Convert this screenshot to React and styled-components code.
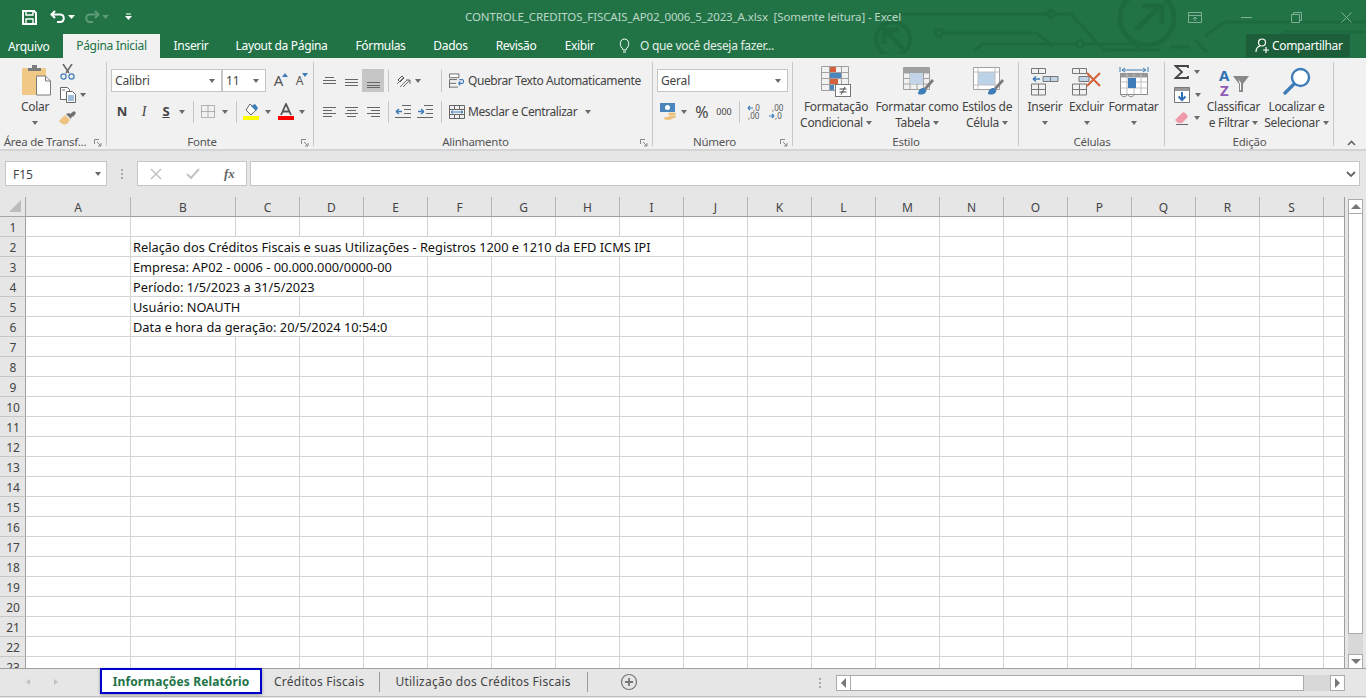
import React from "react";
import styled, { createGlobalStyle } from "styled-components";

const Global = createGlobalStyle`
  html, body { margin: 0; padding: 0; height: 100%; overflow: hidden; background: #e6e6e6; }
  body { font-family: "Noto Sans", "Liberation Sans", sans-serif; font-size: 12px; color: #444; }
  * { box-sizing: border-box; }
`;

const Page = styled.div`
  width: 1366px; height: 698px; display: flex; flex-direction: column; overflow: hidden;
`;
const Header = styled.header`
  position: relative; height: 58px; background: #217346; flex: none; overflow: hidden;
`;
const Circuit = styled.svg`
  position: absolute; left: 860px; top: 0; width: 506px; height: 54px;
`;
const TitleRow = styled.div`
  position: relative; height: 34px; display: flex; align-items: center;
`;
const Qat = styled.div`
  width: 465px; flex: none; display: flex; align-items: center; padding-left: 21px; height: 34px;
`;
const QatItem = styled.span`
  display: flex; align-items: center; justify-content: center; width: ${p => p.$w}px; height: 20px;
`;
const Title = styled.div`
  color: #bcd6c6; font-size: 11.5px; letter-spacing: -0.12px; white-space: pre; width: 440px;
  margin-top: -1px;
`;
const WinControls = styled.div`
  margin-left: auto; display: flex; width: 185px; justify-content: space-between; padding-right: 14px; padding-left: 7px;
`;
const TabsRow = styled.nav`
  position: relative; height: 24px; display: flex; align-items: stretch;
`;
const FileTab = styled.div`
  width: 63px; padding-left: 8px; color: #fff; font-size: 12px; line-height: 26px; letter-spacing: -0.3px;
`;
const RibbonTab = styled.div`
  width: ${p => p.$w}px; flex: none; text-align: center; white-space: nowrap; font-size: 12px; line-height: 23px; letter-spacing: -0.32px;
  color: ${p => p.$active ? "#217346" : "#fff"};
  background: ${p => p.$active ? "#f1f1f1" : "transparent"};
`;
const Tell = styled.div`
  display: flex; align-items: center; gap: 10px; margin-left: 11px; color: #e3eee8; font-size: 12px; letter-spacing: -0.3px; height: 23px;
`;
const Share = styled.div`
  position: absolute; left: 1246px; top: 0; width: 104px; height: 23px; background: #1c5e39; color: #fff;
  display: flex; align-items: center; padding-left: 6px; font-size: 12px; letter-spacing: -0.35px;
`;

const Ribbon = styled.section`
  height: 93px; flex: none; display: flex; background: #f1f1f1; border-bottom: 2px solid #d4d4d4; position: relative;
`;
const Group = styled.div`
  width: ${p => p.$w}px; flex: none; height: 92px; position: relative;
  display: flex; flex-direction: column;
  &::after { content: ""; position: absolute; right: 0; top: 4px; bottom: 4px; width: 1px; background: #c8c8c8; }
`;
const GroupBody = styled.div`
  height: 75px; display: flex; flex-direction: ${p => p.$col ? "column" : "row"};
  padding-top: ${p => p.$pt ?? 0}px; padding-left: ${p => p.$pl ?? 0}px; gap: ${p => p.$gap ?? 0}px;
`;
const GroupLabel = styled.div`
  height: 17px; text-align: center; font-size: 11.5px; line-height: 17px; color: #555; white-space: nowrap; letter-spacing: -0.25px;
  padding-right: ${p => p.$pr ?? 0}px;
`;
const Launcher = styled.svg`
  position: absolute; right: 5px; bottom: 3px; width: 8px; height: 8px;
`;
const Row = styled.div`
  display: flex; align-items: center; height: 23px;
`;
const SmallCol = styled.div`
  width: ${p => p.$w}px; margin-left: ${p => p.$ml ?? 0}px; padding-top: 2px; display: flex; flex-direction: column; flex: none;
`;
const Tool = styled.span`
  display: flex; align-items: center; justify-content: center; flex: none; height: 23px; width: ${p => p.$w}px;
  background: ${p => p.$active ? "#c6c6c6" : "transparent"};
  margin-left: ${p => p.$ml ?? 0}px; gap: ${p => p.$gap ?? 0}px;
`;
const GrowTool = styled(Tool)`
  position: relative;
`;
const GrowMark = styled.svg`
  position: absolute; top: 4px; right: ${p => p.$r}px; width: 6px; height: 4px;
`;
const Caret = styled.span`
  display: inline-block; flex: none; width: 0; height: 0; margin-left: ${p => p.$ml ?? 0}px;
  border-left: 3.5px solid transparent; border-right: 3.5px solid transparent; border-top: 4px solid #6a6a6a;
`;
const Sep = styled.span`
  flex: none; width: 1px; height: 22px; background: #c6c6c6; margin-left: ${p => p.$ml ?? 0}px;
`;
const Combo = styled.div`
  width: ${p => p.$w}px; height: 23px; background: #fff; border: 1px solid #c6c6c6; flex: none;
  display: flex; align-items: center; justify-content: space-between; padding: 0 6px 0 3px; font-size: 12px; color: #444; letter-spacing: -0.2px;
`;
const Glyph = styled.span`
  font-family: ${p => p.$serif ? '"Liberation Serif", serif' : '"Noto Sans", sans-serif'};
  font-size: ${p => p.$s ?? 13}px; font-weight: ${p => p.$b ? 700 : 400}; font-style: ${p => p.$i ? "italic" : "normal"};
  text-decoration: ${p => p.$u ? "underline" : "none"}; color: ${p => p.$c ?? "#444"}; line-height: 1;
`;
const TextTool = styled.span`
  display: flex; align-items: center; margin-left: 3px; font-size: 12px; color: #444; white-space: nowrap; letter-spacing: -0.42px; height: 23px;
`;
const Big = styled.div`
  width: ${p => p.$w}px; margin-left: ${p => p.$ml ?? 0}px; flex: none; display: flex; flex-direction: column; align-items: center;
`;
const BigIcon = styled.div`
  height: 41px; width: 100%; display: flex; justify-content: center; align-items: flex-end;
  padding-bottom: ${p => p.$pb ?? 2}px; padding-left: ${p => p.$pl ?? 0}px;
`;
const BigLine = styled.div`
  height: 16px; display: flex; align-items: center; font-size: 12px; line-height: 16px; color: #444; white-space: nowrap; letter-spacing: -0.3px;
`;
const Collapse = styled.svg`
  position: absolute; left: 1347px; top: 82px; width: 9px; height: 6px;
`;

const FormulaBar = styled.div`
  height: 46px; flex: none; display: flex; padding: 10px 6px 0 5px; align-items: flex-start; background: #e6e6e6;
`;
const NameBox = styled.div`
  width: 102px; height: 25px; background: #fff; border: 1px solid #c6c6c6; display: flex; align-items: center; justify-content: space-between;
  padding: 1px 5px 0 7px; font-size: 12px; color: #444;
`;
const Dots = styled.div`
  width: 30px; height: 25px; display: flex; flex-direction: column; align-items: center; justify-content: center; gap: 2px;
  i { width: 2px; height: 2px; background: #aaa; display: block; }
`;
const FxBox = styled.div`
  width: 110px; height: 25px; background: #fff; border: 1px solid #c6c6c6; display: flex; align-items: center; flex: none;
  padding-left: 12px; gap: 24px;
`;
const FormulaInput = styled.div`
  flex: 1; height: 25px; margin-left: 3px; background: #fff; border: 1px solid #c6c6c6; display: flex; align-items: center; justify-content: flex-end; padding-right: 3px;
`;

const SheetArea = styled.main`
  height: 472px; flex: none; display: flex; background: #e6e6e6; overflow: hidden;
`;
const Grid = styled.div`
  width: 1345px; flex: none; height: 472px; overflow: hidden; display: grid;
  grid-template-columns: 26px 105px 105px repeat(17, 64px) 21px;
  grid-auto-rows: 20px; background: #fff;
`;
const Corner = styled.div`
  background: #e6e6e6; border-right: 1px solid #a6a6a6; border-bottom: 1px solid #a6a6a6; display: flex; align-items: flex-end; justify-content: flex-end; padding: 0 4px 4px 0;
`;
const ColHead = styled.div`
  background: #e6e6e6; border-right: 1px solid ${p => p.$last ? "#9f9f9f" : "#b4b4b4"}; border-bottom: 1px solid #9f9f9f;
  text-align: center; line-height: 21px; font-size: 12px; color: #444; overflow: hidden;
`;
const RowHead = styled.div`
  background: #e6e6e6; border-right: 1px solid #9f9f9f; border-bottom: 1px solid #c6c6c6;
  text-align: center; line-height: 21px; font-size: 12px; color: #444; padding-left: 1px; overflow: hidden;
`;
const Cell = styled.div`
  grid-column: span ${p => p.$span ?? 1};
  border-right: 1px solid ${p => p.$last ? "#9f9f9f" : "#d4d4d4"}; border-bottom: 1px solid #d4d4d4;
  padding-left: 2px; font-size: 12.8px; line-height: 20px; color: #111; white-space: nowrap; overflow: hidden;
`;
const VScroll = styled.aside`
  width: 21px; flex: none; height: 472px; padding: 2px 0 0 3px; display: flex; flex-direction: column;
`;
const SBtn = styled.div`
  width: ${p => p.$w ?? 15}px; height: ${p => p.$h ?? 15}px; background: #fff; border: 1px solid #ababab; display: flex; align-items: center; justify-content: center; flex: none;
`;
const VThumb = styled.div`
  width: 15px; height: 420px; background: #fff; border: 1px solid #ababab; border-top: 0; flex: none;
`;
const VTrack = styled.div`
  width: 15px; flex: 1; background: #d8d8d8;
`;
const Arrow = styled.span`
  width: 0; height: 0; display: block; flex: none;
  ${p => p.$dir === "up" && "border-left:5px solid transparent;border-right:5px solid transparent;border-bottom:5px solid #777;"}
  ${p => p.$dir === "down" && "border-left:5px solid transparent;border-right:5px solid transparent;border-top:5px solid #777;"}
  ${p => p.$dir === "left" && "border-top:5px solid transparent;border-bottom:5px solid transparent;border-right:5px solid #777;"}
  ${p => p.$dir === "right" && "border-top:5px solid transparent;border-bottom:5px solid transparent;border-left:5px solid #777;"}
`;
const SheetBar = styled.footer`
  height: 29px; flex: none; display: flex; align-items: flex-start; background: #e6e6e6; border-top: 1px solid #9f9f9f; border-bottom: 1px solid #c0c0c0; position: relative;
  margin-top: -1px;
`;
const NavArrows = styled.div`
  width: 100px; flex: none; height: 26px; display: flex; align-items: center; padding-left: 26px; gap: 24px;
`;
const SmallArrow = styled.span`
  width: 0; height: 0; display: block;
  border-top: 3.5px solid transparent; border-bottom: 3.5px solid transparent;
  ${p => p.$left ? "border-right: 4px solid #c2c2c2;" : "border-left: 4px solid #c2c2c2;"}
`;
const ActiveSheet = styled.div`
  width: 162px; height: 26px; margin-top: -1px; background: #fff; border: 2px solid #0000c8; box-shadow: 0 1px 3px rgba(0,0,0,.35);
  color: #217346; font-weight: 700; font-size: 12px; text-align: center; line-height: 24px; letter-spacing: .13px;
`;
const SheetTab = styled.div`
  padding: 0 ${p => p.$pr}px 0 ${p => p.$pl}px; height: 26px; line-height: 26px; font-size: 12px; color: #444; white-space: nowrap; letter-spacing: .25px;
`;
const TabSep = styled.span`
  width: 1px; height: 20px; margin-top: 3px; background: #9a9a9a; flex: none;
`;
const Plus = styled.svg`
  width: 18px; height: 18px; margin: 4px 0 0 32px; flex: none;
`;
const HDots = styled.div`
  position: absolute; left: 819px; top: 9px; display: flex; flex-direction: column; gap: 2px;
  i { width: 2px; height: 2px; background: #aaa; display: block; }
`;
const HScroll = styled.div`
  position: absolute; left: 836px; top: 6px; width: 509px; height: 16px; display: flex; background: #d8d8d8;
`;
const HThumb = styled.div`
  width: 453px; height: 16px; background: #fff; border: 1px solid #ababab; border-left: 0; flex: none;
`;
const HTrack = styled.div`flex: 1;`;

const S = ({ w, h, children, ...r }) => <svg width={w} height={h} viewBox={`0 0 ${w} ${h}`} fill="none" {...r}>{children}</svg>;

const SaveI = () => <S w={15} h={15}><path d="M1 1h11l2 2v11H1z" stroke="#fff" strokeWidth="2"/><path d="M4 1v4h7V1M4 14V9h7v5" stroke="#fff" strokeWidth="1.4"/></S>;
const UndoI = ({ c = "#fff" }) => <S w={16} h={14}><path d="M5 1 1.5 4.5 5 8" stroke={c} strokeWidth="2"/><path d="M2 4.5h8c5 0 5 7.5 0 7.5H7" stroke={c} strokeWidth="2"/></S>;
const RedoI = () => <S w={16} h={14}><g transform="matrix(-1 0 0 1 16 0)"><path d="M5 1 1.5 4.5 5 8" stroke="#5d9a78" strokeWidth="2"/><path d="M2 4.5h8c5 0 5 7.5 0 7.5H7" stroke="#5d9a78" strokeWidth="2"/></g></S>;
const WCaret = ({ c = "#fff" }) => <S w={7} h={4}><path d="M0 0h7L3.5 4z" fill={c}/></S>;
const CustomI = () => <S w={7} h={8}><path d="M1 1h5" stroke="#fff"/><path d="M0 3h7L3.5 7z" fill="#fff"/></S>;

const ClipI = () => <S w={30} h={31}>
  <rect x="0" y="3" width="24" height="27" rx="1" fill="#f0c987"/>
  <path d="M6 6V3h4V0h5v3h4v3z" fill="#7b7b7b"/>
  <path d="M14.5 11h9l5 5v14h-14z" fill="#fff" stroke="#7b7b7b"/><path d="M23.5 11v5h5" stroke="#7b7b7b"/>
</S>;
const Scissors = () => <S w={15} h={16}>
  <path d="M3 0l6 9M12 0 6 9" stroke="#6a6a6a" strokeWidth="1.6"/>
  <circle cx="3.5" cy="12.5" r="2.6" stroke="#3e7cb8" strokeWidth="1.2"/><circle cx="11.5" cy="12.5" r="2.6" stroke="#3e7cb8" strokeWidth="1.2"/>
</S>;
const CopyI = () => <S w={16} h={16}>
  <path d="M.5.5h7l2 2v10H.5z" fill="#fff" stroke="#666"/>
  <path d="M2 3h3" stroke="#666"/>
  <path d="M6.5 4.5h6l3 3v8h-9z" fill="#fff" stroke="#666"/>
  <path d="M8 9h6M8 11h6M8 13h6" stroke="#3e7cb8"/>
</S>;
const Brush = () => <S w={17} h={14}>
  <path d="M0 10 6 4l5 5-3 4c-3 1-6 0-8-3z" fill="#eec27f"/>
  <path d="M7 3l3-1 3 3-1 3zM11 3l4-3 2 2-3 4z" fill="#6f6f6f"/>
</S>;
const BorderI = () => <S w={14} h={13}>
  <path d="M.5.5h13v12H.5z" stroke="#777" strokeDasharray="1 1"/><path d="M7 .5v12M.5 6.500h13" stroke="#777" strokeDasharray="1 1"/>
</S>;
const FillI = () => <S w={17} h={17}>
  <path d="M7 1l6 6-5 5-5-5z" fill="#fff" stroke="#666"/>
  <path d="M8 3l4-2 3 4-2 3z" fill="#3e7cb8"/>
  <rect x="0" y="13" width="16" height="4" fill="#ffff00"/>
</S>;
const ColorA = () => <S w={16} h={17}>
  <path d="M3 12 8 1l5 11M5 8.500h6" stroke="#555" strokeWidth="1.8"/>
  <rect x="0" y="13" width="16" height="4" fill="#ff0000"/>
</S>;
const Lines = ({ ys, xs }) => <S w={15} h={15}>{ys.map((y, i) => <path key={i} d={`M${xs ? xs[i][0] : 1} ${y + .5}H${xs ? xs[i][1] : 14}`} stroke="#666"/>)}</S>;
const Orient = () => <S w={16} h={16}>
  <path d="M2 11 9 4M5 14 12 7" stroke="#777"/><path d="M3 7l4-4 2 2-4 4z" stroke="#555"/><path d="M8 14l7-7M15 7v4M15 7h-4" stroke="#666"/>
</S>;
const OutI = ({ flip }) => <S w={16} h={13}>
  <path d="M7 .5h9M9 4.500h7M9 8.500h7M0 12.500h16" stroke="#666"/>
  <g transform={flip ? "matrix(-1 0 0 1 8 0)" : ""}><path d="M1 6.500h6M1 6.500 4 4M1 6.500 4 9" stroke="#3e7cb8" strokeWidth="1.5"/></g>
</S>;
const WrapI = () => <S w={17} h={16}>
  <path d="M.5.5h10v4H.5z" fill="#fff" stroke="#666"/><path d="M.5 6.500h8M.5 15.500V6.500M.5 10.500h7M.5 14.500h9" stroke="#666"/>
  <path d="M10 10.500h4c2 0 2-4 0-4h-3M10 10.500l2-2M10 10.500l2 2" stroke="#3e7cb8" strokeWidth="1.2"/>
</S>;
const MergeI = () => <S w={16} h={16}>
  <path d="M.5 1.500h15v13H.5zM.5 5.500h15M.5 10.500h15M5.500 1.500v4M10.500 1.500v4M5.500 10.500v4M10.500 10.500v4" stroke="#666"/>
  <path d="M2 8h12M2 8l2-1.500M2 8l2 1.500M14 8l-2-1.500M14 8l-2 1.500" stroke="#3e7cb8"/>
</S>;
const Currency = () => <S w={17} h={17}>
  <rect x="0" y="0" width="15" height="9" fill="#4a86bd"/><circle cx="7.500" cy="4.500" r="2.500" fill="#fff"/>
  <ellipse cx="12" cy="11" rx="4" ry="1.400" fill="#eec27f"/><ellipse cx="12" cy="14" rx="4" ry="1.400" fill="#eec27f"/><ellipse cx="8" cy="15.500" rx="4" ry="1.400" fill="#eec27f"/>
</S>;
const DecI = ({ inc }) => <S w={16} h={16}>
  <text x={inc ? 6 : 4} y="7" fontFamily="Noto Sans" fontSize="8" fill="#555">{inc ? ",0" : ",00"}</text>
  <text x={inc ? 1 : 7} y="15" fontFamily="Noto Sans" fontSize="8" fill="#555">{inc ? ",00" : ",0"}</text>
  {inc ? <path d="M1 4h5M1 4l2-2M1 4l2 2" stroke="#3e7cb8" strokeWidth="1.2"/> : <path d="M1 12h5M6 12l-2-2M6 12l-2 2" stroke="#3e7cb8" strokeWidth="1.2"/>}
</S>;
const CondFmt = () => <S w={30} h={31}>
  <path d="M.5.5h27v24H.5zM.5 6.500h27M.5 12.500h27M.5 18.500h27M8.500.5v24M20.500.5v24" stroke="#a0a0a0"/>
  <rect x="9" y="1" width="6" height="5" fill="#d5603a"/>
  <rect x="9" y="7" width="11" height="5" fill="#4a86bd"/>
  <rect x="9" y="13" width="8" height="5" fill="#d5603a"/>
  <rect x="9" y="19" width="4" height="5" fill="#4a86bd"/>
  <rect x="14.500" y="18.500" width="15" height="12" fill="#fff" stroke="#777"/>
  <path d="M18.500 23h7M18.500 26h7M24 21l-4 7.500" stroke="#444"/>
</S>;
const Pen = () => <g><path d="M21 21l8-9 2 2-8 9z" fill="#7a7a7a"/><path d="M15 27c0-4 3-6 5-6s4 2 3 4c-2 3-5 3-8 2z" fill="#3e7cb8"/></g>;
const TableFmt = () => <S w={32} h={30}>
  <path d="M.5.5h26v22H.5zM.5 6h26M.5 11.500h26M.5 17h26M7 .5v22M14 .5v22M20.500.5v22" stroke="#a0a0a0"/>
  <rect x="1" y="1" width="25" height="5" fill="#a0a0a0"/><rect x="7" y="6" width="13" height="11" fill="#c2d4e8"/>
  <Pen/>
</S>;
const CellFmt = () => <S w={32} h={30}>
  <path d="M.5.5h26v22H.5z" fill="#fff" stroke="#a0a0a0"/><rect x="5" y="5" width="17" height="13" fill="#bcd2e8"/>
  <path d="M5 .5v22M22 .5v22M.5 5h26M.5 18h26" stroke="#c0c0c0"/>
  <Pen/>
</S>;
const InsertI = () => <S w={28} h={28}>
  <path d="M.5.5h14v5H.5zM7.500.5v5" stroke="#777"/>
  <path d="M.5 16h14v11H.5zM.5 21.500h14M7.500 16v11" stroke="#777"/>
  <path d="M12 8.500h15v5H12zM19.500 8.500v5" fill="#c2d4e8" stroke="#777"/>
  <path d="M2 11h7M2 11l3-2.500M2 11l3 2.500" stroke="#3e7cb8" strokeWidth="1.5"/>
</S>;
const DeleteI = () => <S w={30} h={28}>
  <path d="M.5.5h14v5H.5zM7.500.5v5" stroke="#777"/>
  <path d="M.5 16h14v11H.5zM.5 21.500h14M7.500 16v11" stroke="#777"/>
  <path d="M7 8.500h10v5H7z" fill="#c2d4e8" stroke="#777"/>
  <path d="M15 5l13 13M28 5 15 18" stroke="#d5603a" strokeWidth="2"/>
</S>;
const FormatI = () => <S w={30} h={32}>
  <path d="M1 0v5M29 0v5M3 3h24M3 3l3-2M3 3l3 2M27 3l-3-2M27 3l-3 2" stroke="#3e7cb8"/>
  <path d="M1.500 6.500h27v21H1.500z" fill="#fff" stroke="#888"/><path d="M1.500 6.500h27v4h-27z" fill="#999"/>
  <path d="M1.500 15h27M1.500 21h27M8 6.500v21M15 6.500v21M22 6.500v21" stroke="#c0c0c0"/>
  <rect x="9" y="11" width="8" height="10" fill="#3e7cb8"/>
  <path d="M1.500 27.500c2 3 5 3 7 0 2 3 5 3 7 0" stroke="#888"/>
</S>;
const SigmaI = () => <S w={15} h={14}><path d="M14 3V1H1.500L8 7 1.500 13H14v-2" stroke="#444" strokeWidth="1.800"/></S>;
const FillDown = () => <S w={16} h={16}>
  <path d="M.5.5h15v15H.5z" fill="#fff" stroke="#777"/><rect x="1" y="1" width="14" height="3" fill="#999"/>
  <path d="M8 5v8M4.500 9.500 8 13l3.500-3.500" stroke="#2f70b5" strokeWidth="2"/>
</S>;
const Eraser = () => <S w={15} h={14}>
  <path d="M1 9l7-7c1-1 2-1 3 0l2 2c1 1 1 2 0 3l-5 5H4z" fill="#ef9aa8"/><path d="M2 13.500h12" stroke="#666"/>
</S>;
const SortI = () => <S w={32} h={30}>
  <text x="1" y="14" fontFamily="Noto Sans" fontWeight="700" fontSize="15" fill="#2f70b5">A</text>
  <text x="2" y="29" fontFamily="Noto Sans" fontWeight="700" fontSize="15" fill="#8e5bb5">Z</text>
  <path d="M15 9h16l-6 8v8h-4v-8z" fill="#888"/><path d="M20 12l3 4v7h-1v-6z" fill="#fff"/>
</S>;
const FindI = () => <S w={28} h={29}>
  <circle cx="17.500" cy="10.500" r="8.500" stroke="#3e7cb8" strokeWidth="2.400" fill="#fff"/>
  <path d="M11 17 2 26" stroke="#3e7cb8" strokeWidth="3.400" strokeLinecap="round"/>
</S>;
const Launch = () => <Launcher viewBox="0 0 8 8" fill="none"><path d="M.5 5V.5H5" stroke="#888"/><path d="M3 3l4 4M7 4v3H4" stroke="#888"/></Launcher>;
const X = () => <S w={12} h={12}><path d="M1 1l10 10M11 1 1 11" stroke="#c4c4c4" strokeWidth="1.600"/></S>;
const Check = () => <S w={14} h={12}><path d="M1 6l4 4 8-9" stroke="#c4c4c4" strokeWidth="2"/></S>;
const Chevron = () => <S w={10} h={6}><path d="M1 1l4 4 4-4" stroke="#666" strokeWidth="1.800"/></S>;
const Bulb = () => <S w={11} h={15}><path d="M3 10C0 7 1 1 5.500 1S11 7 8 10c-.5.5-1 1-1 2H4c0-1-.5-1.500-1-2zM4 14h3" stroke="#fff"/></S>;
const ShareI = () => <S w={15} h={15}><circle cx="7" cy="4.500" r="3.500" stroke="#fff" strokeWidth="1.200"/><path d="M1 14c0-3.500 2-5.500 4-6M9 8.500" stroke="#fff" strokeWidth="1.200"/><path d="M8 12h6M11 9v6" stroke="#fff" strokeWidth="1.200"/></S>;

const CircuitArt = () => (
  <Circuit viewBox="0 0 506 54" fill="none" stroke="#1d6a3f" strokeWidth="3">
    <circle cx="33" cy="39" r="17" strokeWidth="4"/>
    <path d="M46 52 26 31M24 44V30h15" strokeWidth="5"/>
    <path d="M15 14H191" />
    <circle cx="191" cy="14" r="3.500"/>
    <path d="M195 14h16l33 36H300" />
    <circle cx="79" cy="33" r="3.500"/>
    <path d="M83 33H176l17 13" />
    <circle cx="220" cy="44" r="3.500"/>
    <path d="M115 50l8-6h92M225 44h50l6 6" />
    <circle cx="287" cy="18" r="27" strokeWidth="5"/>
    <path d="M276 30 300 6M282 6h20v18" strokeWidth="5"/>
    <path d="M310 47 330 47M335 40l12 12M345 36l20-14h141M405 50l20-18h81" />
  </Circuit>
);

const columns = "ABCDEFGHIJKLMNOPQRS".split("");
const colCount = 20;
const rowsData = {
  2: { span: 8, text: "Relação dos Créditos Fiscais e suas Utilizações - Registros 1200 e 1210 da EFD ICMS IPI" },
  3: { span: 4, text: "Empresa: AP02 - 0006 - 00.000.000/0000-00" },
  4: { span: 3, text: "Período: 1/5/2023 a 31/5/2023" },
  5: { span: 2, text: "Usuário: NOAUTH" },
  6: { span: 4, text: "Data e hora da geração: 20/5/2024 10:54:0" },
};

function Sheet() {
  const rows = [];
  for (let r = 1; r <= 23; r++) {
    const d = rowsData[r];
    const cells = [<RowHead key="h">{r}</RowHead>, <Cell key="a" />];
    let start = 1;
    if (d) {
      cells.push(<Cell key="b" $span={d.span}>{d.text}</Cell>);
      start = 1 + d.span;
    }
    for (let c = start; c < colCount; c++) cells.push(<Cell key={c} $last={c === colCount - 1} />);
    rows.push(<React.Fragment key={r}>{cells}</React.Fragment>);
  }
  return (
    <Grid>
      <Corner><S w={12} h={12}><path d="M12 0v12H0z" fill="#bcbcbc"/></S></Corner>
      {columns.map(c => <ColHead key={c}>{c}</ColHead>)}
      <ColHead $last />
      {rows}
    </Grid>
  );
}

export default function App() {
  return (
    <Page>
      <Global />
      <Header>
        <CircuitArt />
        <TitleRow>
          <Qat>
            <QatItem $w={16}><SaveI /></QatItem>
            <QatItem $w={13} />
            <QatItem $w={16}><UndoI /></QatItem>
            <QatItem $w={11}><WCaret /></QatItem>
            <QatItem $w={7} />
            <QatItem $w={16}><RedoI /></QatItem>
            <QatItem $w={11}><WCaret c="#5d9a78" /></QatItem>
            <QatItem $w={13} />
            <QatItem $w={9}><CustomI /></QatItem>
          </Qat>
          <Title>CONTROLE_CREDITOS_FISCAIS_AP02_0006_5_2023_A.xlsx  [Somente leitura] - Excel</Title>
          <WinControls>
            <S w={14} h={11}><path d="M.5.5h13v10H.5zM.5 3.500h13M7 9V5M5 7l2-2 2 2" stroke="#7fb096"/></S>
            <S w={11} h={11}><path d="M0 5.500h11" stroke="#7fb096"/></S>
            <S w={11} h={11}><path d="M.5 2.500h8v8h-8zM2.500 2.500v-2h8v8h-2" stroke="#7fb096"/></S>
            <S w={11} h={11}><path d="M.5.5l10 10M10.500.5l-10 10" stroke="#7fb096"/></S>
          </WinControls>
        </TitleRow>
        <TabsRow>
          <FileTab>Arquivo</FileTab>
          <RibbonTab $w={97} $active>Página Inicial</RibbonTab>
          <RibbonTab $w={62}>Inserir</RibbonTab>
          <RibbonTab $w={119}>Layout da Página</RibbonTab>
          <RibbonTab $w={79}>Fórmulas</RibbonTab>
          <RibbonTab $w={61}>Dados</RibbonTab>
          <RibbonTab $w={70}>Revisão</RibbonTab>
          <RibbonTab $w={57}>Exibir</RibbonTab>
          <Tell><Bulb /><span>O que você deseja fazer...</span></Tell>
          <Share><Tool $w={20}><ShareI /></Tool>Compartilhar</Share>
        </TabsRow>
      </Header>

      <Ribbon>
        <Group $w={107}>
          <GroupBody>
            <Big $w={46} $ml={12}>
              <BigIcon $pb={3} $pl={3}><ClipI /></BigIcon>
              <BigLine>Colar</BigLine>
              <BigLine><Caret /></BigLine>
            </Big>
            <SmallCol $w={30}>
              <Tool $w={18}><Scissors /></Tool>
              <Tool $w={30} $gap={4}><CopyI /><Caret /></Tool>
              <Tool $w={18}><Brush /></Tool>
            </SmallCol>
          </GroupBody>
          <GroupLabel $pr={17}>Área de Transf...</GroupLabel>
          <Launch />
        </Group>

        <Group $w={207}>
          <GroupBody $col $pt={11} $pl={4} $gap={8}>
            <Row>
              <Combo $w={111}>Calibri<Caret /></Combo>
              <Combo $w={44}>11<Caret /></Combo>
              <GrowTool $w={21} $ml={2}>
                <Glyph $s={15} $c="#555">A</Glyph>
                <GrowMark $r={1} viewBox="0 0 6 4"><path d="M0 4l3-4 3 4z" fill="#3e7cb8"/></GrowMark>
              </GrowTool>
              <GrowTool $w={21}>
                <Glyph $s={12} $c="#555">A</Glyph>
                <GrowMark $r={2} viewBox="0 0 6 4"><path d="M0 0h6L3 4z" fill="#3e7cb8"/></GrowMark>
              </GrowTool>
            </Row>
            <Row>
              <Tool $w={22}><Glyph $b>N</Glyph></Tool>
              <Tool $w={22}><Glyph $i $serif $s={14}>I</Glyph></Tool>
              <Tool $w={22}><Glyph $b $u>S</Glyph></Tool>
              <Tool $w={10}><Caret /></Tool>
              <Sep $ml={6} />
              <Tool $w={22} $ml={3}><BorderI /></Tool>
              <Tool $w={12}><Caret /></Tool>
              <Sep $ml={5} />
              <Tool $w={17} $ml={6}><FillI /></Tool>
              <Tool $w={16}><Caret /></Tool>
              <Tool $w={20}><ColorA /></Tool>
              <Tool $w={12}><Caret /></Tool>
            </Row>
          </GroupBody>
          <GroupLabel $pr={17}>Fonte</GroupLabel>
          <Launch />
        </Group>

        <Group $w={339}>
          <GroupBody $col $pt={11} $pl={4} $gap={8}>
            <Row>
              <Tool $w={22}><Lines ys={[4, 7, 10]} xs={[[3,12],[1,14],[1,14]]} /></Tool>
              <Tool $w={22}><Lines ys={[6, 9, 12]} /></Tool>
              <Tool $w={22} $active><Lines ys={[9, 12, 14]} /></Tool>
              <Sep $ml={4} />
              <Tool $w={20} $ml={4}><Orient /></Tool>
              <Tool $w={10}><Caret /></Tool>
              <Sep $ml={18} />
              <Tool $w={16} $ml={7}><WrapI /></Tool>
              <TextTool>Quebrar Texto Automaticamente</TextTool>
            </Row>
            <Row>
              <Tool $w={22}><Lines ys={[3, 6, 9, 12]} xs={[[1,14],[1,10],[1,14],[1,10]]} /></Tool>
              <Tool $w={22}><Lines ys={[3, 6, 9, 12]} xs={[[1,14],[3,12],[1,14],[3,12]]} /></Tool>
              <Tool $w={22}><Lines ys={[3, 6, 9, 12]} xs={[[1,14],[5,14],[1,14],[5,14]]} /></Tool>
              <Sep $ml={4} />
              <Tool $w={22} $ml={3}><OutI /></Tool>
              <Tool $w={22}><OutI flip /></Tool>
              <Sep $ml={5} />
              <Tool $w={16} $ml={7}><MergeI /></Tool>
              <TextTool>Mesclar e Centralizar<Caret $ml={8} /></TextTool>
            </Row>
          </GroupBody>
          <GroupLabel $pr={16}>Alinhamento</GroupLabel>
          <Launch />
        </Group>

        <Group $w={140}>
          <GroupBody $col $pt={11} $pl={4} $gap={8}>
            <Row><Combo $w={131}>Geral<Caret /></Combo></Row>
            <Row>
              <Tool $w={22}><Currency /></Tool>
              <Tool $w={9}><Caret /></Tool>
              <Tool $w={28}><Glyph $s={16}>%</Glyph></Tool>
              <Tool $w={16}><Glyph $s={9}>000</Glyph></Tool>
              <Sep $ml={7} />
              <Tool $w={22} $ml={4}><DecI inc /></Tool>
              <Tool $w={20}><DecI /></Tool>
            </Row>
          </GroupBody>
          <GroupLabel $pr={17}>Número</GroupLabel>
          <Launch />
        </Group>

        <Group $w={226}>
          <GroupBody>
            <Big $w={80} $ml={3}>
              <BigIcon><CondFmt /></BigIcon>
              <BigLine>Formatação</BigLine>
              <BigLine>Condicional<Caret $ml={3} /></BigLine>
            </Big>
            <Big $w={82}>
              <BigIcon $pl={4}><TableFmt /></BigIcon>
              <BigLine>Formatar como</BigLine>
              <BigLine>Tabela<Caret $ml={3} /></BigLine>
            </Big>
            <Big $w={58}>
              <BigIcon $pl={4}><CellFmt /></BigIcon>
              <BigLine>Estilos de</BigLine>
              <BigLine>Célula<Caret $ml={3} /></BigLine>
            </Big>
          </GroupBody>
          <GroupLabel>Estilo</GroupLabel>
        </Group>

        <Group $w={146}>
          <GroupBody>
            <Big $w={42} $ml={5}>
              <BigIcon $pb={3}><InsertI /></BigIcon>
              <BigLine>Inserir</BigLine>
              <BigLine><Caret /></BigLine>
            </Big>
            <Big $w={41}>
              <BigIcon $pb={3}><DeleteI /></BigIcon>
              <BigLine>Excluir</BigLine>
              <BigLine><Caret /></BigLine>
            </Big>
            <Big $w={53}>
              <BigIcon $pb={0}><FormatI /></BigIcon>
              <BigLine>Formatar</BigLine>
              <BigLine><Caret /></BigLine>
            </Big>
          </GroupBody>
          <GroupLabel>Células</GroupLabel>
        </Group>

        <Group $w={169}>
          <GroupBody>
            <SmallCol $w={32} $ml={6}>
              <Tool $w={32} $gap={5}><SigmaI /><Caret /></Tool>
              <Tool $w={32} $gap={5}><FillDown /><Caret /></Tool>
              <Tool $w={32} $gap={5}><Eraser /><Caret /></Tool>
            </SmallCol>
            <Big $w={61}>
              <BigIcon><SortI /></BigIcon>
              <BigLine>Classificar</BigLine>
              <BigLine>e Filtrar<Caret $ml={3} /></BigLine>
            </Big>
            <Big $w={65}>
              <BigIcon $pb={3}><FindI /></BigIcon>
              <BigLine>Localizar e</BigLine>
              <BigLine>Selecionar<Caret $ml={3} /></BigLine>
            </Big>
          </GroupBody>
          <GroupLabel>Edição</GroupLabel>
        </Group>
        <Collapse viewBox="0 0 9 6" fill="none"><path d="M1 5l3.500-3.500L8 5" stroke="#666" strokeWidth="1.600"/></Collapse>
      </Ribbon>

      <FormulaBar>
        <NameBox>F15<Caret /></NameBox>
        <Dots><i /><i /><i /></Dots>
        <FxBox><X /><Check /><Glyph $serif $i $b $s={13} $c="#666">fx</Glyph></FxBox>
        <FormulaInput><Chevron /></FormulaInput>
      </FormulaBar>

      <SheetArea>
        <Sheet />
        <VScroll>
          <SBtn><Arrow $dir="up" /></SBtn>
          <VThumb />
          <VTrack />
          <SBtn><Arrow $dir="down" /></SBtn>
        </VScroll>
      </SheetArea>

      <SheetBar>
        <NavArrows><SmallArrow $left /><SmallArrow /></NavArrows>
        <ActiveSheet>Informações Relatório</ActiveSheet>
        <SheetTab $pl={12} $pr={15}>Créditos Fiscais</SheetTab>
        <TabSep />
        <SheetTab $pl={15} $pr={16}>Utilização dos Créditos Fiscais</SheetTab>
        <TabSep />
        <Plus viewBox="0 0 18 18" fill="none"><circle cx="9" cy="9" r="7.500" stroke="#777" strokeWidth="1.200"/><path d="M5 9h8M9 5v8" stroke="#777" strokeWidth="1.800"/></Plus>
        <HDots><i /><i /><i /></HDots>
        <HScroll>
          <SBtn $w={15} $h={16}><Arrow $dir="left" /></SBtn>
          <HThumb />
          <HTrack />
          <SBtn $w={15} $h={16}><Arrow $dir="right" /></SBtn>
        </HScroll>
      </SheetBar>
    </Page>
  );
}
